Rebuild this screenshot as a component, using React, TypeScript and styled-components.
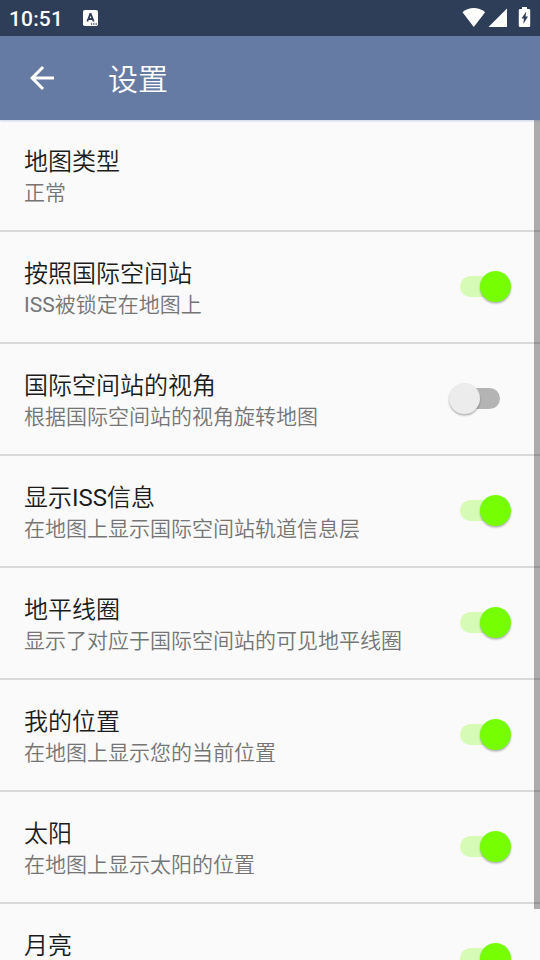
import React, { useState } from 'react';
import styled, { createGlobalStyle } from 'styled-components';

const GlobalStyle = createGlobalStyle`
  * { box-sizing: border-box; }
  body {
    margin: 0;
    overflow: hidden;
    background: #fafafa;
    font-family: Roboto, "Noto Sans CJK SC", sans-serif;
  }
`;

const Screen = styled.div`
  position: relative;
  display: flex;
  flex-direction: column;
  width: 540px;
  height: 960px;
  overflow: hidden;
  background: #fafafa;
`;

const StatusBar = styled.header`
  display: flex;
  align-items: center;
  flex: none;
  height: 36px;
  padding: 0 9px;
  background: #2e3e58;
  color: #fff;
`;

const Clock = styled.span`
  width: 74px;
  font-size: 21px;
  font-weight: 500;
  line-height: 36px;
  letter-spacing: 0.15px;
  padding-top: 1px;
`;

const StatusIcons = styled.div`
  display: flex;
  margin-left: auto;
`;

const AppBar = styled.div`
  display: flex;
  align-items: center;
  flex: none;
  height: 84px;
  padding-left: 24px;
  background: #657ba3;
  color: #fff;
  box-shadow: 0 1px 2px rgba(60, 90, 170, 0.25);
  z-index: 1;
`;

const BackButton = styled.button`
  display: flex;
  width: 36px;
  height: 36px;
  padding: 0;
  border: 0;
  background: none;
  color: inherit;
`;

const PageTitle = styled.h1`
  margin: 4px 0 0 48px;
  font-size: 30px;
  font-weight: 350;
  line-height: 40px;
`;

const List = styled.main`
  flex: 1;
  min-height: 0;
  overflow: hidden;
`;

const Row = styled.section`
  display: flex;
  justify-content: space-between;
  align-items: flex-start;
  height: 112px;
  padding: 25px 40px 0 24px;
  border-bottom: 2px solid #d9d9d9;
`;

const Labels = styled.div`
  display: flex;
  flex-direction: column;
  white-space: nowrap;
`;

const Title = styled.span`
  color: #1c1c1c;
  font-size: 24px;
  font-weight: 350;
  line-height: 34px;
`;

const Summary = styled.span`
  color: #757575;
  font-size: 21px;
  font-weight: 350;
  line-height: 28px;
`;

const Latin = styled.span`
  font-weight: 400;
`;

const Toggle = styled.button`
  display: flex;
  align-items: center;
  width: 40px;
  height: 31px;
  margin-top: 14px;
  padding: 0;
  border: 0;
  background: none;
`;

const Track = styled.span<{ $on: boolean }>`
  display: flex;
  align-items: center;
  flex: none;
  width: 40px;
  height: 21px;
  border-radius: 11px;
  background: ${p => (p.$on ? '#d5fbb6' : '#b4b4b4')};
`;

const Thumb = styled.span<{ $on: boolean }>`
  flex: none;
  width: 31px;
  height: 31px;
  margin-left: ${p => (p.$on ? '20px' : '-11px')};
  border-radius: 50%;
  background: ${p => (p.$on ? '#76ff03' : '#ececec')};
  box-shadow: 0 1.5px 2px rgba(0, 0, 0, 0.3);
`;

const Scrollbar = styled.div`
  position: absolute;
  top: 120px;
  right: 0;
  width: 6px;
  height: 789px;
  background: rgba(0, 0, 0, 0.31);
`;

type Setting = { title: string; summary?: string; on?: boolean };

const settings: Setting[] = [
  { title: '地图类型', summary: '正常' },
  { title: '按照国际空间站', summary: 'ISS被锁定在地图上', on: true },
  { title: '国际空间站的视角', summary: '根据国际空间站的视角旋转地图', on: false },
  { title: '显示ISS信息', summary: '在地图上显示国际空间站轨道信息层', on: true },
  { title: '地平线圈', summary: '显示了对应于国际空间站的可见地平线圈', on: true },
  { title: '我的位置', summary: '在地图上显示您的当前位置', on: true },
  { title: '太阳', summary: '在地图上显示太阳的位置', on: true },
  { title: '月亮', on: true },
];

/* Latin runs take the regular weight beside the lighter Chinese text. */
function mixed(text: string) {
  return text
    .split(/([A-Za-z]+)/)
    .filter(Boolean)
    .map((part, i) => (/^[A-Za-z]/.test(part) ? <Latin key={i}>{part}</Latin> : part));
}

function Switch({ initial, label }: { initial: boolean; label: string }) {
  const [on, setOn] = useState(initial);
  return (
    <Toggle role="switch" aria-checked={on} aria-label={label} onClick={() => setOn(!on)}>
      <Track $on={on}>
        <Thumb $on={on} />
      </Track>
    </Toggle>
  );
}

export default function App() {
  return (
    <>
      <GlobalStyle />
      <Screen>
        <StatusBar>
          <Clock>10:51</Clock>
          <svg width="15" height="16" viewBox="0 0 15 16">
            <rect width="15" height="16" rx="1.8" fill="#fff" />
            <path d="M4.3 11.5 7.3 4h.4l3 7.5M5.5 9h4" fill="none" stroke="#2e3e58" strokeWidth="1.8" />
            <path d="M8 14h1.2M10.3 14h1.2M12.6 14h1.2" stroke="#2e3e58" strokeWidth="1.4" />
          </svg>
          <StatusIcons>
            <svg width="71" height="36" viewBox="460 0 71 36" fill="#fff">
              <path d="M462.5 12.2C466 9.3 469.800 8 473.800 8s7.800 1.300 11.300 4.200L473.800 27z" />
              <path d="M507 8.500V27h-18.500z" />
              <path d="M522 7h5v2h2q1.200 0 1.200 1.200v15.600q0 1.200-1.200 1.200h-9q-1.200 0-1.200-1.200V10.200Q518.800 9 520 9h2z" />
              <path d="M526.300 11.500 521.500 18.500h2.500l-.8 5.500 4.800-7.500h-2.500z" fill="#2e3e58" />
            </svg>
          </StatusIcons>
        </StatusBar>
        <AppBar>
          <BackButton aria-label="返回">
            <svg width="36" height="36" viewBox="0 0 24 24" fill="currentColor">
              <path d="M20 11H7.830l5.590-5.590L12 4l-8 8 8 8 1.410-1.410L7.830 13H20v-2z" />
            </svg>
          </BackButton>
          <PageTitle>设置</PageTitle>
        </AppBar>
        <List>
          {settings.map(s => (
            <Row key={s.title}>
              <Labels>
                <Title>{mixed(s.title)}</Title>
                {s.summary && <Summary>{mixed(s.summary)}</Summary>}
              </Labels>
              {s.on !== undefined && <Switch initial={s.on} label={s.title} />}
            </Row>
          ))}
        </List>
        <Scrollbar />
      </Screen>
    </>
  );
}
